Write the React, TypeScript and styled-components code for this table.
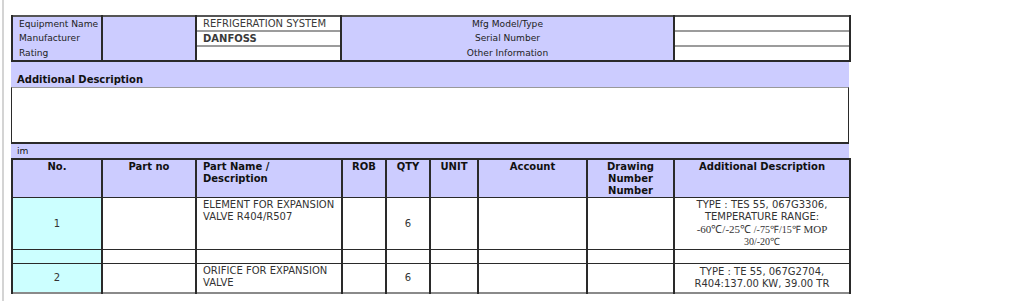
import React from 'react';
import styled, { createGlobalStyle } from 'styled-components';

const GlobalStyle = createGlobalStyle`
  body {
    margin: 0;
    background: #ffffff;
    font-family: "DejaVu Sans", Verdana, sans-serif;
    font-size: 10px;
    color: #222;
  }
`;

const Page = styled.div`
  margin-left: 2px;
  border-left: 2px solid #d4d4d4;
  padding: 15px 0 0 7px;
  height: 286px;
  overflow: hidden;
`;

const Sheet = styled.div`
  width: 838px;
`;

const Grid = styled.table`
  width: 100%;
  border-collapse: collapse;
  table-layout: fixed;
`;

const InfoCell = styled.td<{ $tone?: 'label' | 'value'; $align?: string; $bold?: boolean; $lineTop?: boolean }>`
  height: 13px;
  padding: 0 6px;
  line-height: 13px;
  white-space: nowrap;
  overflow: hidden;
  font-size: ${({ $tone }) => ($tone === 'value' ? '10px' : '9.1px')};
  background: ${({ $tone }) => ($tone === 'value' ? '#ffffff' : '#ccccff')};
  text-align: ${({ $align }) => $align || 'left'};
  font-weight: ${({ $bold }) => ($bold ? 'bold' : 'normal')};
  color: ${({ $tone }) => ($tone === 'value' ? '#3a3a3a' : '#222')};
  border-left: 2px solid #2a2a2a;
  border-right: 2px solid #2a2a2a;
  border-top: ${({ $lineTop }) => ($lineTop ? '2px solid #9c9c9c' : 'none')};
  vertical-align: middle;
`;

const InfoTable = styled(Grid)`
  border-top: 2px solid #555;
  border-bottom: 2px solid #2a2a2a;
`;

const Band = styled.div<{ $h: number; $bold?: boolean }>`
  height: ${({ $h }) => $h}px;
  background: #ccccff;
  display: flex;
  align-items: flex-end;
  padding: 0 6px 1px;
  box-sizing: border-box;
  font-weight: ${({ $bold }) => ($bold ? 'bold' : 'normal')};
  font-size: ${({ $bold }) => ($bold ? '10px' : '9.1px')};
  color: #111;
  line-height: 12px;
`;

const DescBox = styled.div`
  height: 54px;
  border: 1px solid #2a2a2a;
  border-top: 1px solid #999;
  border-bottom: 2px solid #2a2a2a;
`;

const ItemTable = styled(Grid)`
  border-top: 2px solid #2a2a2a;
  border-bottom: 2px solid #8a8a8a;
`;

const Head = styled.th<{ $align?: string }>`
  background: #ccccff;
  height: 36px;
  padding: 1px 6px 0;
  vertical-align: top;
  text-align: ${({ $align }) => $align || 'center'};
  font-weight: bold;
  line-height: 12px;
  color: #111;
  border-left: 2px solid #2a2a2a;
  border-right: 2px solid #2a2a2a;
`;

const Cell = styled.td<{ $no?: boolean; $align?: string; $top?: boolean; $h?: number }>`
  background: ${({ $no }) => ($no ? '#ccffff' : '#ffffff')};
  height: ${({ $h }) => ($h ? `${$h}px` : 'auto')};
  padding: 1px 6px;
  line-height: 12px;
  text-align: ${({ $align }) => $align || 'center'};
  vertical-align: ${({ $top }) => ($top ? 'top' : 'middle')};
  color: #333;
  border-left: 2px solid #2a2a2a;
  border-right: 2px solid #2a2a2a;
  border-top: 1px solid #2a2a2a;
`;

const Serif = styled.span<{ $small?: boolean }>`
  font-family: "Liberation Serif", "Times New Roman", serif;
  font-size: ${({ $small }) => ($small ? '10px' : '11px')};
`;

const cols = [90, 94, 146, 44, 44, 48, 109, 87, 176];

const items = [
  {
    no: '1',
    name: ['ELEMENT FOR EXPANSION', 'VALVE R404/R507'],
    qty: '6',
    h: 46,
    desc: (
      <>
        TYPE : TES 55, 067G3306,
        <br />
        TEMPERATURE RANGE:
        <br />
        <Serif>-60℃/-25℃ </Serif>
        <Serif $small>/-75℉/15℉</Serif>
        <Serif> MOP</Serif>
        <br />
        <Serif $small>30/-20℃</Serif>
      </>
    ),
  },
  {
    no: '2',
    name: ['ORIFICE FOR EXPANSION', 'VALVE'],
    qty: '6',
    h: 26,
    desc: (
      <>
        TYPE : TE 55, 067G2704,
        <br />
        R404:137.00 KW, 39.00 TR
      </>
    ),
  },
];

export default function App() {
  return (
    <>
      <GlobalStyle />
      <Page>
        <Sheet>
          <InfoTable>
            <colgroup>
              <col style={{ width: 90 }} />
              <col style={{ width: 94 }} />
              <col style={{ width: 145 }} />
              <col style={{ width: 333 }} />
              <col style={{ width: 176 }} />
            </colgroup>
            <tbody>
              <tr>
                <InfoCell>Equipment Name</InfoCell>
                <InfoCell rowSpan={3} />
                <InfoCell $tone="value">REFRIGERATION SYSTEM</InfoCell>
                <InfoCell $align="center">Mfg Model/Type</InfoCell>
                <InfoCell $tone="value" />
              </tr>
              <tr>
                <InfoCell>Manufacturer</InfoCell>
                <InfoCell $tone="value" $bold $lineTop>DANFOSS</InfoCell>
                <InfoCell $align="center">Serial Number</InfoCell>
                <InfoCell $tone="value" $lineTop />
              </tr>
              <tr>
                <InfoCell>Rating</InfoCell>
                <InfoCell $tone="value" $lineTop />
                <InfoCell $align="center">Other Information</InfoCell>
                <InfoCell $tone="value" $lineTop />
              </tr>
            </tbody>
          </InfoTable>
          <Band $h={25} $bold>Additional Description</Band>
          <DescBox />
          <Band $h={14}>im</Band>
          <ItemTable>
            <colgroup>
              {cols.map((w, i) => (
                <col key={i} style={{ width: w }} />
              ))}
            </colgroup>
            <thead>
              <tr>
                <Head>No.</Head>
                <Head>Part no</Head>
                <Head $align="left">Part Name /<br />Description</Head>
                <Head>ROB</Head>
                <Head>QTY</Head>
                <Head>UNIT</Head>
                <Head>Account</Head>
                <Head>Drawing<br />Number<br />Number</Head>
                <Head>Additional Description</Head>
              </tr>
            </thead>
            <tbody>
              {items.map((it, idx) => (
                <React.Fragment key={it.no}>
                  {idx > 0 && (
                    <tr>
                      <Cell $no $h={11} />
                      <Cell /><Cell /><Cell /><Cell /><Cell /><Cell /><Cell /><Cell />
                    </tr>
                  )}
                  <tr>
                    <Cell $no $h={it.h}>{it.no}</Cell>
                    <Cell />
                    <Cell $align="left" $top>
                      {it.name[0]}
                      <br />
                      {it.name[1]}
                    </Cell>
                    <Cell />
                    <Cell>{it.qty}</Cell>
                    <Cell />
                    <Cell />
                    <Cell />
                    <Cell>{it.desc}</Cell>
                  </tr>
                </React.Fragment>
              ))}
            </tbody>
          </ItemTable>
        </Sheet>
      </Page>
    </>
  );
}
